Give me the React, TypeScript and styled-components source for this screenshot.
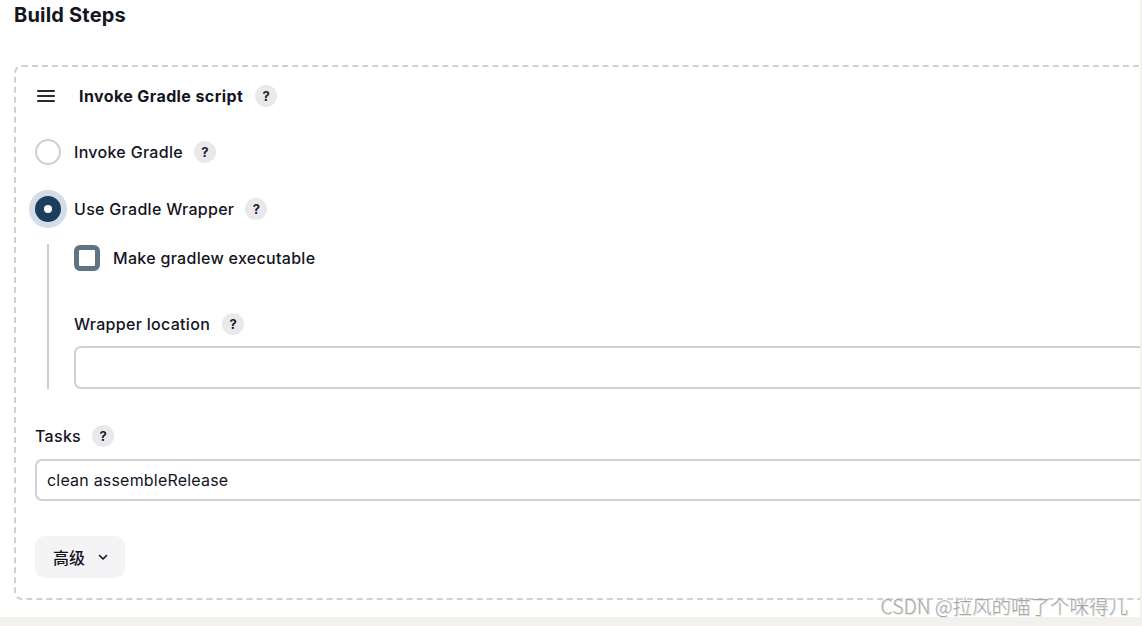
import styled, { createGlobalStyle } from "styled-components";

const GlobalStyle = createGlobalStyle`
  html, body {
    margin: 0;
    padding: 0;
    background: #f2f1ed;
  }
  body {
    font-family: Inter, "Noto Sans", "Noto Sans CJK SC", sans-serif;
    color: #14141f;
  }
`;

const Screen = styled.div`
  position: relative;
  width: 1142px;
  height: 626px;
`;

const Page = styled.div`
  width: 1140px;
  height: 617px;
  background: #ffffff;
  overflow: hidden;
  padding-left: 14px;
  box-sizing: border-box;
`;

const Title = styled.h2`
  margin: 3px 0 0;
  font-size: 20px;
  line-height: 24px;
  font-weight: 700;
  letter-spacing: 0.2px;
`;

const StepBox = styled.section`
  margin-top: 38px;
  width: 1160px;
  border: 2px dashed #cdd1d7;
  border-radius: 8px;
  padding: 17px 19px 20px;
  display: flex;
  flex-direction: column;
`;

const HeaderRow = styled.div`
  display: flex;
  align-items: center;
  height: 24px;
`;

const Handle = styled.span`
  width: 18px;
  margin: 0 24px 0 2px;
  display: flex;
  flex-direction: column;
  gap: 3px;

  i {
    display: block;
    height: 2px;
    background: #2b2b35;
    border-radius: 1px;
  }
`;

const StepName = styled.span`
  font-size: 16px;
  font-weight: 700;
  letter-spacing: 0.4px;
`;

const Help = styled.span<{ $gap?: number }>`
  width: 22px;
  height: 22px;
  border-radius: 50%;
  background: #e9e9eb;
  display: inline-flex;
  align-items: center;
  justify-content: center;
  font-size: 13px;
  font-weight: 700;
  letter-spacing: 0;
  color: #1e1e26;
  margin-left: ${(p) => p.$gap ?? 11}px;
  flex-shrink: 0;
`;

const OptionRow = styled.label<{ $top: number }>`
  display: flex;
  align-items: center;
  height: 26px;
  margin-top: ${(p) => p.$top}px;
  font-size: 16px;
  font-weight: 500;
  letter-spacing: 0.3px;
`;

const Radio = styled.span<{ $checked?: boolean }>`
  width: 26px;
  height: 26px;
  border-radius: 50%;
  box-sizing: border-box;
  margin-right: 13px;
  flex-shrink: 0;
  display: flex;
  align-items: center;
  justify-content: center;
  border: ${(p) => (p.$checked ? "none" : "2px solid #cbcfd5")};
  background: ${(p) => (p.$checked ? "#1c3d5c" : "#fff")};
  box-shadow: ${(p) => (p.$checked ? "0 0 0 6px #d2dde9" : "none")};

  &::after {
    content: "";
    display: ${(p) => (p.$checked ? "block" : "none")};
    width: 8px;
    height: 8px;
    border-radius: 50%;
    background: #fff;
  }
`;

const Nested = styled.div`
  margin: 22px 0 0 12px;
  border-left: 2px solid #cbcfd5;
  padding: 1px 0 0 25px;
  display: flex;
  flex-direction: column;
`;

const CheckRow = styled.label`
  display: flex;
  align-items: center;
  height: 26px;
  font-size: 16px;
  font-weight: 500;
  letter-spacing: 0.3px;
`;

const Checkbox = styled.span`
  width: 26px;
  height: 26px;
  box-sizing: border-box;
  border: 5px solid #5e7484;
  border-radius: 6px;
  background: #fff;
  margin-right: 13px;
`;

const FieldLabel = styled.div<{ $top: number }>`
  display: flex;
  align-items: center;
  height: 24px;
  margin-top: ${(p) => p.$top}px;
  font-size: 16px;
  font-weight: 500;
  letter-spacing: 0.3px;
`;

const TextInput = styled.div<{ $top: number; $height: number }>`
  margin-top: ${(p) => p.$top}px;
  height: ${(p) => p.$height}px;
  box-sizing: border-box;
  border: 2px solid #cdd1d7;
  border-radius: 7px;
  padding: 0 10px;
  display: flex;
  align-items: center;
  font-size: 16px;
  font-weight: 400;
  letter-spacing: 0.2px;
  color: #14141f;
`;

const AdvancedButton = styled.button`
  margin-top: 35px;
  align-self: flex-start;
  height: 42px;
  width: 90px;
  border: none;
  border-radius: 10px;
  background: #f4f4f6;
  display: flex;
  align-items: center;
  justify-content: center;
  gap: 12px;
  font-family: "Noto Sans CJK SC", Inter, sans-serif;
  font-size: 16px;
  font-weight: 500;
  color: #14141f;
  padding: 0 0 0 2px;
`;

const Watermark = styled.div`
  position: absolute;
  right: 14px;
  top: 593px;
  line-height: 26px;
  font-family: "Noto Sans CJK SC", "Liberation Sans", sans-serif;
  font-weight: 300;
  font-size: 19.5px;
  color: #a6a6a6;
  text-shadow: 1px 1px 0 #e4e4e4;
  white-space: nowrap;
`;

export default function App() {
  return (
    <Screen>
      <GlobalStyle />
      <Page>
        <Title>Build Steps</Title>
        <StepBox>
          <HeaderRow>
            <Handle>
              <i />
              <i />
              <i />
            </Handle>
            <StepName>Invoke Gradle script</StepName>
            <Help $gap={12}>?</Help>
          </HeaderRow>

          <OptionRow $top={31}>
            <Radio />
            Invoke Gradle
            <Help>?</Help>
          </OptionRow>

          <OptionRow $top={31}>
            <Radio $checked />
            Use Gradle Wrapper
            <Help>?</Help>
          </OptionRow>

          <Nested>
            <CheckRow>
              <Checkbox />
              Make gradlew executable
            </CheckRow>
            <FieldLabel $top={41}>
              Wrapper location
              <Help $gap={12}>?</Help>
            </FieldLabel>
            <TextInput $top={10} $height={43} />
          </Nested>

          <FieldLabel $top={35}>
            Tasks
            <Help>?</Help>
          </FieldLabel>
          <TextInput $top={11} $height={42}>
            clean assembleRelease
          </TextInput>

          <AdvancedButton>
            高级
            <svg width="12" height="12" viewBox="0 0 12 12" fill="none">
              <path
                d="M2.5 4.5 6 8l3.5-3.5"
                stroke="#14141f"
                strokeWidth="1.6"
                strokeLinecap="round"
                strokeLinejoin="round"
              />
            </svg>
          </AdvancedButton>
        </StepBox>
      </Page>
      <Watermark>CSDN @拉风的喵了个咪得儿</Watermark>
    </Screen>
  );
}
